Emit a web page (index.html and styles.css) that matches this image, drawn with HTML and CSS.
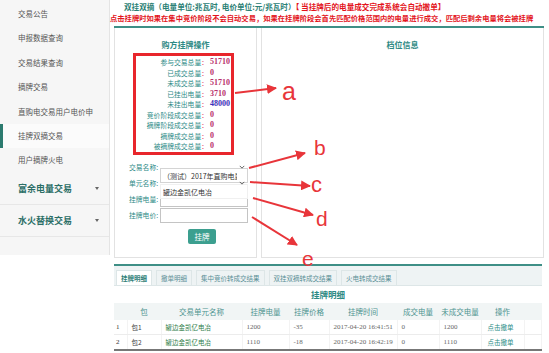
FILE: index.html
```html
<!DOCTYPE html>
<html lang="zh-CN">
<head>
    <meta charset="UTF-8">
    <meta name="viewport" content="width=device-width, initial-scale=1.0">
    <title>双挂双摘</title>
    <link rel="stylesheet" href="styles.css">
</head>
<body>
    <!-- 左侧菜单 -->
    <div class="sidebar">
        <div class="menu-item">交易公告</div>
        <div class="menu-item">申报数据查询</div>
        <div class="menu-item">交易结果查询</div>
        <div class="menu-item">摘牌交易</div>
        <div class="menu-item">直购电交易用户电价申</div>
        <div class="menu-item active">挂牌双摘交易</div>
        <div class="menu-item">用户摘牌火电</div>
        <div class="menu-group">富余电量交易 <span class="caret"></span></div>
        <div class="menu-group">水火替换交易 <span class="caret"></span></div>
    </div>

    <div class="main">
        <div class="page-title">
            <p class="title-1">双挂双摘（电量单位:兆瓦时, 电价单位:元/兆瓦时）<span class="red">【 当挂牌后的电量成交完成系统会自动撤单】</span></p>
            <p class="title-2">点击挂牌时如果在集中竞价阶段不会自动交易，如果在挂牌阶段会首先匹配价格范围内的电量进行成交，匹配后剩余电量将会被挂牌</p>
        </div>

        <div class="panels">
            <!-- 购方挂牌操作 -->
            <div class="panel panel-left">
                <div class="panel-title">购方挂牌操作</div>
                <div class="summary">
                    <div class="sum-row"><span class="sum-label">参与交易总量<i>：</i></span><span class="sum-val">51710</span></div>
                    <div class="sum-row"><span class="sum-label">已成交总量<i>：</i></span><span class="sum-val">0</span></div>
                    <div class="sum-row"><span class="sum-label">未成交总量<i>：</i></span><span class="sum-val">51710</span></div>
                    <div class="sum-row"><span class="sum-label">已挂出电量<i>：</i></span><span class="sum-val">3710</span></div>
                    <div class="sum-row"><span class="sum-label">未挂出电量<i>：</i></span><span class="sum-val blue">48000</span></div>
                    <div class="sum-row"><span class="sum-label">竞价阶段成交总量<i>：</i></span><span class="sum-val">0</span></div>
                    <div class="sum-row"><span class="sum-label">摘牌阶段成交总量<i>：</i></span><span class="sum-val">0</span></div>
                    <div class="sum-row"><span class="sum-label">摘牌成交总量<i>：</i></span><span class="sum-val">0</span></div>
                    <div class="sum-row"><span class="sum-label">被摘牌成交总量<i>：</i></span><span class="sum-val">0</span></div>
                </div>

                <div class="form">
                    <div class="form-row">
                        <label>交易名称:</label>
                        <div class="select-wrap">
                            <select><option>（测试）2017年直购电量挂牌</option></select>
                            <svg class="chev" viewBox="0 0 8 5"><path d="M1 1l3 3 3-3" fill="none" stroke="#555" stroke-width="1.2"/></svg>
                        </div>
                    </div>
                    <div class="form-row">
                        <label>单元名称:</label>
                        <div class="select-wrap plain">
                            <select><option>罐边金凯亿电冶</option></select>
                            <svg class="chev" viewBox="0 0 8 5"><path d="M1 1l3 3 3-3" fill="none" stroke="#555" stroke-width="1.2"/></svg>
                        </div>
                    </div>
                    <div class="form-row">
                        <label>挂牌电量:</label>
                        <input type="text">
                    </div>
                    <div class="form-row">
                        <label>挂牌电价:</label>
                        <input type="text">
                    </div>
                    <button class="btn">挂牌</button>
                </div>
            </div>

            <!-- 档位信息 -->
            <div class="panel panel-right">
                <div class="panel-title">档位信息</div>
            </div>
        </div>

        <!-- 明细 -->
        <div class="detail">
            <div class="tabs">
                <span class="tab active">挂牌明细</span>
                <span class="tab">撤单明细</span>
                <span class="tab">集中竞价转成交结果</span>
                <span class="tab">双挂双摘转成交结果</span>
                <span class="tab">火电转成交结果</span>
            </div>
            <div class="detail-title">挂牌明细</div>
            <table class="list">
                <colgroup>
                    <col style="width:13px"><col style="width:34px"><col style="width:81px"><col style="width:47px">
                    <col style="width:40px"><col style="width:68px"><col style="width:42px"><col style="width:42px">
                    <col style="width:43px"><col>
                </colgroup>
                <thead>
                    <tr><th></th><th>包</th><th>交易单元名称</th><th>挂牌电量</th><th>挂牌价格</th><th>挂牌时间</th><th>成交电量</th><th>未成交电量</th><th>操作</th><th></th></tr>
                </thead>
                <tbody>
                    <tr><td class="num">1</td><td>包1</td><td class="unit">罐边金凯亿电冶</td><td class="num">1200</td><td class="num">-35</td><td class="num">2017-04-20 16:41:51</td><td class="num">0</td><td class="num">1200</td><td class="op">点击撤单</td><td></td></tr>
                    <tr><td class="num">2</td><td>包2</td><td class="unit">罐边金凯亿电冶</td><td class="num">1110</td><td class="num">-18</td><td class="num">2017-04-20 16:42:19</td><td class="num">0</td><td class="num">1110</td><td class="op">点击撤单</td><td></td></tr>
                </tbody>
            </table>
        </div>
    </div>

    <!-- 标注箭头 -->
    <svg class="notes" width="549" height="353" viewBox="0 0 549 353">
        <defs>
            <marker id="head" viewBox="0 0 10 10" refX="9" refY="5" markerWidth="5" markerHeight="5" orient="auto">
                <path d="M0 0L10 5L0 10z" fill="#e8353a"/>
            </marker>
        </defs>
        <g stroke="#e8353a" stroke-width="2" marker-end="url(#head)">
            <line x1="235" y1="93" x2="276" y2="88"/>
            <line x1="249" y1="168" x2="305" y2="153"/>
            <line x1="250" y1="182" x2="310" y2="186"/>
            <line x1="253" y1="198" x2="313" y2="215"/>
            <line x1="252" y1="217" x2="297" y2="245"/>
        </g>
        <g fill="#e8353a" font-family="Liberation Sans, sans-serif">
            <text x="282" y="100" font-size="25">a</text>
            <text x="314" y="155" font-size="21">b</text>
            <text x="311" y="192" font-size="22">c</text>
            <text x="316" y="226" font-size="21">d</text>
            <text x="302" y="266" font-size="21">e</text>
        </g>
    </svg>
</body>
</html>
```

FILE: styles.css
```css
body { margin: 0; width: 549px; height: 353px; overflow: hidden; display: flex; align-items: flex-start; background: #fff; font-family: "Noto Sans CJK SC", sans-serif; position: relative; }

/* 菜单 */
.sidebar { width: 110px; height: 255px; padding-top: 2px; box-sizing: border-box; background: #f6f6f6; border-right: 1px solid #e4e4e4; flex-shrink: 0; }
.menu-item { height: 24.4px; line-height: 24.4px; padding-left: 18px; font-size: 7.5px; color: #555; border-left: 3px solid transparent; margin-left: -3px; }
.menu-item.active { background: #fbfbfb; border-left-color: #2c7b6f; margin-left: 0; padding-left: 15px; }
.menu-group { height: 31px; line-height: 31px; padding-left: 18px; font-size: 9px; font-weight: bold; color: #2b6e66; border-bottom: 1px solid #e7e7e7; position: relative; }
.menu-group:first-of-type { border-top: 1px solid #e7e7e7; }
.caret { position: absolute; left: 95px; top: 14px; border-left: 2.5px solid transparent; border-right: 2.5px solid transparent; border-top: 3px solid #666; }

/* 主区域 */
.main { width: 430px; margin-left: 4px; }
.page-title { height: 26px; border-bottom: 2px solid #3e8f86; }
.page-title p { margin: 0; white-space: nowrap; font-weight: bold; }
.title-1 { font-size: 7.6px; line-height: 12px; padding-left: 10px; padding-top: 1px; color: #2a8074; }
.title-1 .red { color: #e3141c; }
.title-2 { font-size: 7.3px; line-height: 11px; color: #e3141c; margin-left: -4px !important; }

.panels { display: flex; gap: 4px; height: 230px; }
.panel { border: 1px solid #e2e2e2; border-top: none; box-sizing: border-box; }
.panel-left { width: 143px; }
.panel-right { flex: 1; }
.panel-title { margin-top: 9px; line-height: 16px; text-align: center; font-size: 8px; font-weight: bold; color: #2e8a84; }

.summary { margin-left: 18px; width: 101px; border: 3px solid #e8262c; box-sizing: border-box; padding-top: 1px; }
.sum-row { display: flex; line-height: 10.5px; height: 10.5px; }
.sum-label { width: 72px; text-align: right; font-size: 6.8px; color: #2d8a86; white-space: nowrap; }
.sum-label i { font-style: normal; color: #e0245e; }
.sum-val { padding-left: 2px; font-family: "Liberation Serif", serif; font-weight: bold; font-size: 8px; color: #b8306a; }
.sum-val.blue { color: #3a2fb8; }

.form { padding: 5px 0 0 14px; }
.form-row { display: flex; align-items: center; height: 15px; margin-bottom: 1px; }
.form-row label { width: 31px; font-size: 6.8px; color: #2d8a86; white-space: nowrap; }
.form-row input { width: 88px; height: 15px; box-sizing: border-box; border: 1px solid #c4c4c4; padding: 0 2px; margin: 0; }
.select-wrap { position: relative; width: 88px; height: 15px; }
.select-wrap select { appearance: none; -webkit-appearance: none; width: 88px; height: 15px; margin: 0; padding: 0 10px 0 2px; border: 1px solid #d4d4d4; background: #fff; font-family: "Noto Sans CJK SC", sans-serif; font-size: 7px; color: #333; box-sizing: border-box; }
.select-wrap.plain select { border-color: #f0f0f0; }
.chev { position: absolute; right: 3px; top: 5px; width: 6px; height: 4px; }
.btn { display: block; margin: 6px 0 0 59px; width: 28px; height: 15px; padding: 0; border: none; border-radius: 2px; background: #3c9f8f; color: #fff; font-size: 7.5px; font-family: "Noto Sans CJK SC", sans-serif; }

/* 明细 */
.detail { margin-top: 6px; border-top: 2px solid #3e8f86; width: 428px; }
.tabs { height: 19px; background: #eef3f4; display: flex; align-items: flex-end; padding-left: 2px; gap: 4px; border-bottom: 1px solid #dde6e7; }
.tab { font-size: 6.5px; color: #5a8f96; padding: 0 4px; line-height: 14px; border: 1px solid #dde6e7; border-bottom: none; background: #eef3f4; }
.tab.active { background: #fff; color: #2f7f78; font-weight: bold; }
.detail-title { text-align: center; line-height: 17px; font-size: 8.5px; font-weight: bold; color: #2e8a84; }

.list { width: 428px; border-collapse: collapse; table-layout: fixed; }
.list th { height: 17px; background: #f1f5f5; font-weight: normal; font-size: 7.5px; color: #4e9490; text-align: center; padding: 0; }
.list td { height: 14px; font-size: 6.5px; color: #444; padding: 0 0 0 4px; border-bottom: 1px solid #ececec; border-right: 1px solid #f3f3f3; white-space: nowrap; overflow: hidden; }
.list td.num { font-family: "Liberation Serif", serif; font-size: 7px; color: #666; }
.list td:first-child { padding-left: 2px; color: #333; }
.list td.unit { color: #2f7d4a; }
.list td.op { color: #2b8c86; padding-left: 6px; }
.list tbody tr:last-child td { border-bottom: 2px solid #777; }

.notes { position: absolute; left: 0; top: 0; pointer-events: none; }
```
